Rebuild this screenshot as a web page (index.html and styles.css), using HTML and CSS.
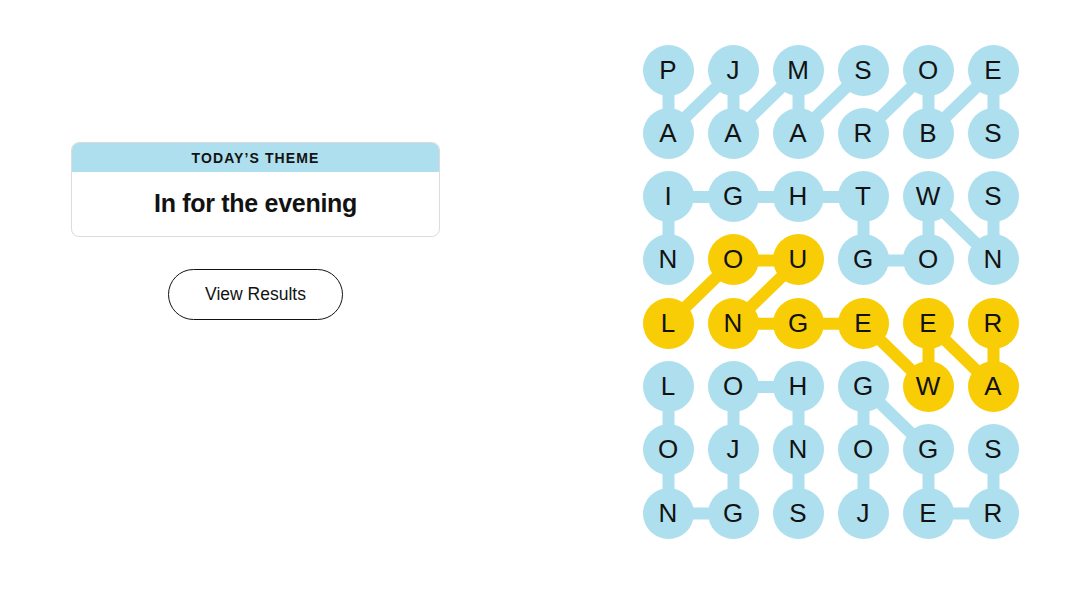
FILE: index.html
```html
<!DOCTYPE html>
<html lang="en">
<head>
<meta charset="utf-8">
<title>Strands</title>
<link rel="stylesheet" href="styles.css">
</head>
<body>
<main class="page">
  <section class="side">
    <div class="theme-card">
      <div class="theme-label">TODAY’S THEME</div>
      <div class="theme-title">In for the evening</div>
    </div>
    <button class="results-btn" type="button">View Results</button>
  </section>
  <section class="board">
    <svg class="links" width="376" height="494" viewBox="0 0 376 494" aria-hidden="true">
      <g fill="none" stroke="#aedfee" stroke-width="12">
        <polyline points="25.5,25.5 25.5,88.8 90.5,25.5 90.5,88.8 155.5,25.5 155.5,88.8 220.5,25.5"/>
        <polyline points="220.5,88.8 285.5,25.5 285.5,88.8 350.5,25.5 350.5,88.8"/>
        <polyline points="25.5,215.4 25.5,152.1 220.5,152.1 220.5,215.4 285.5,215.4 285.5,152.1 350.5,215.4 350.5,152.1"/>
        <polyline points="25.5,342 25.5,468.6 90.5,468.6 90.5,342 155.5,342 155.5,468.6"/>
        <polyline points="220.5,468.6 220.5,342 285.5,405.3 285.5,468.6 350.5,468.6 350.5,405.3"/>
      </g>
      <g fill="none" stroke="#f8cd05" stroke-width="12">
        <polyline points="25.5,278.7 90.5,215.4 155.5,215.4 90.5,278.7 155.5,278.7 220.5,278.7 285.5,342 285.5,278.7 350.5,342 350.5,278.7"/>
      </g>
    </svg>
    <div class="grid">
      <span class="cell">P</span><span class="cell">J</span><span class="cell">M</span><span class="cell">S</span><span class="cell">O</span><span class="cell">E</span>
      <span class="cell">A</span><span class="cell">A</span><span class="cell">A</span><span class="cell">R</span><span class="cell">B</span><span class="cell">S</span>
      <span class="cell">I</span><span class="cell">G</span><span class="cell">H</span><span class="cell">T</span><span class="cell">W</span><span class="cell">S</span>
      <span class="cell">N</span><span class="cell span">O</span><span class="cell span">U</span><span class="cell">G</span><span class="cell">O</span><span class="cell">N</span>
      <span class="cell span">L</span><span class="cell span">N</span><span class="cell span">G</span><span class="cell span">E</span><span class="cell span">E</span><span class="cell span">R</span>
      <span class="cell">L</span><span class="cell">O</span><span class="cell">H</span><span class="cell">G</span><span class="cell span">W</span><span class="cell span">A</span>
      <span class="cell">O</span><span class="cell">J</span><span class="cell">N</span><span class="cell">O</span><span class="cell">G</span><span class="cell">S</span>
      <span class="cell">N</span><span class="cell">G</span><span class="cell">S</span><span class="cell">J</span><span class="cell">E</span><span class="cell">R</span>
    </div>
  </section>
</main>
</body>
</html>
```
FILE: styles.css
```css
* { box-sizing: border-box; }
html, body { margin: 0; padding: 0; background: #fff; }
body {
  font-family: "Liberation Sans", Arial, sans-serif;
  color: #121212;
}
.page {
  display: flex;
  align-items: flex-start;
  padding: 44.5px 0 0 71px;
  width: 1084px;
  height: 615px;
}
.side {
  width: 369px;
  margin-top: 97.5px;
  display: flex;
  flex-direction: column;
  align-items: center;
  gap: 32px;
}
.theme-card {
  width: 369px;
  border: 1px solid #dcdcdc;
  border-radius: 8px;
  overflow: hidden;
}
.theme-label {
  background: #aedfee;
  height: 29px;
  display: flex;
  align-items: center;
  justify-content: center;
  font-size: 14px;
  font-weight: 600;
  letter-spacing: 1.1px;
  color: #121212;
}
.theme-title {
  height: 64px;
  display: flex;
  align-items: center;
  justify-content: center;
  font-size: 25px;
  font-weight: 700;
  letter-spacing: -0.3px;
  color: #121212;
  padding-bottom: 1px;
}
.results-btn {
  width: 175px;
  height: 51px;
  border: 1px solid #121212;
  border-radius: 999px;
  background: #fff;
  font-family: "Liberation Sans", Arial, sans-serif;
  font-size: 17.5px;
  color: #121212;
  padding: 0;
}
.board {
  position: relative;
  margin-left: 202.5px;
  width: 376px;
  height: 494px;
}
.links {
  position: absolute;
  left: 0;
  top: 0;
}
.grid {
  position: relative;
  display: grid;
  grid-template-columns: repeat(6, 51px);
  grid-auto-rows: 51px;
  column-gap: 14px;
  row-gap: 12.3px;
}
.cell {
  width: 51px;
  height: 51px;
  border-radius: 50%;
  background: #aedfee;
  display: flex;
  align-items: center;
  justify-content: center;
  font-size: 26px;
  color: #121212;
}
.cell.span {
  background: #f8cd05;
}
```
